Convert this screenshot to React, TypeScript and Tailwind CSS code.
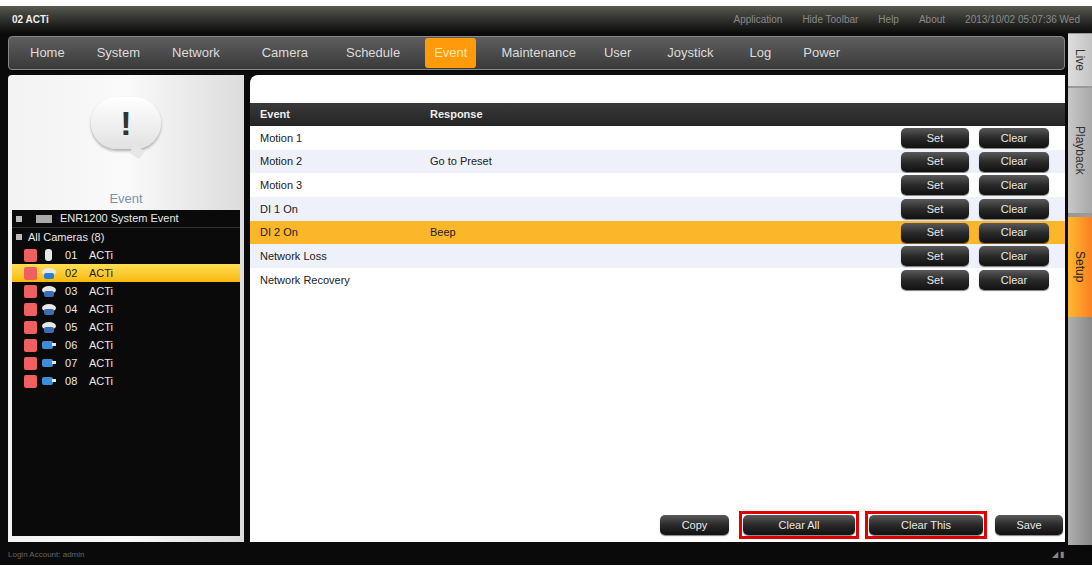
import React from "react";

const F = { fontFamily: '"Liberation Sans", Arial, sans-serif' };

function Btn({ label, w, red }: { label: string; w: string; red?: boolean }) {
  const b = (
    <div className={`${red ? "" : w} h-[20px] rounded-[5px] bg-gradient-to-b from-[#5a5a5a] via-[#2a2a2a] to-[#111] text-[#e8e8e8] text-[11px] flex items-center justify-center shadow-[0_1px_1px_rgba(0,0,0,0.5)]`}>
      {label}
    </div>
  );
  if (red) return <div className={`${w} border-[3px] border-[#e00000] p-[1px]`}>{b}</div>;
  return b;
}

const rows = [
  ["Motion 1", ""],
  ["Motion 2", "Go to Preset"],
  ["Motion 3", ""],
  ["DI 1 On", ""],
  ["DI 2 On", "Beep"],
  ["Network Loss", ""],
  ["Network Recovery", ""],
];

function CamIcon({ i }: { i: number }) {
  const c = i === 0 ? "#ddd" : i < 5 ? "#cfd8e0" : "#3a8fd8";
  return (
    <svg width="16" height="13" viewBox="0 0 16 13">
      {i === 0 ? (
        <rect x="4" y="0" width="7" height="12" rx="3" fill="#e8e8e8" />
      ) : i < 5 ? (
        <>
          <ellipse cx="8" cy="5" rx="7" ry="4" fill="#e8e8e8" />
          <rect x="3" y="6" width="10" height="6" rx="2" fill={i === 1 ? "#2a7fd0" : "#3a6fb8"} />
        </>
      ) : (
        <>
          <rect x="1" y="2" width="11" height="8" rx="2" fill={c} />
          <rect x="11" y="4" width="4" height="3" fill="#e8e8e8" />
        </>
      )}
    </svg>
  );
}

const nav: [string, string][] = [
  ["Home", "mr-[14px]"],
  ["System", "mr-[14px]"],
  ["Network", "mr-[24px]"],
  ["Camera", "mr-[20px]"],
  ["Schedule", "mr-[16px]"],
  ["Event", "mr-[16px]"],
  ["Maintenance", "mr-[10px]"],
  ["User", "mr-[18px]"],
  ["Joystick", "mr-[18px]"],
  ["Log", "mr-[14px]"],
  ["Power", ""],
];

export default function App() {
  return (
    <div className="w-[1092px] h-[565px] bg-white overflow-hidden pt-[6px]" style={F}>
      <div className="h-[559px] bg-[#0a0a0a] flex flex-col">
        <div className="h-[27px] bg-gradient-to-b from-[#5a5a52] to-[#0c0c0c] flex items-center px-[12px] text-[10px] text-[#d8d8d8]">
          <span className="font-bold text-[#eee]">02 ACTi</span>
          <div className="ml-auto flex gap-[20px] text-[#8a8a8a] text-[10px]">
            <span>Application</span><span>Hide Toolbar</span><span>Help</span><span>About</span>
            <span>2013/10/02 05:07:36 Wed</span>
          </div>
        </div>
        <div className="flex flex-1 min-h-0">
          <div className="flex-1 flex flex-col pl-[8px] pt-[3px]">
            <div className="h-[34px] mr-[3px] rounded-[4px] border border-[#888] bg-gradient-to-b from-[#5e5e5e] to-[#3a3a3a] flex items-center px-[12px] text-[13px] text-[#dcdcdc]">
              {nav.map(([n, m], i) => (
                <div key={n} className={`h-[30px] flex items-center px-[9px] ${m} ${i === 5 ? "bg-[#ff9a0a] rounded-[3px] text-[#ffe8b0]" : ""}`}>{n}</div>
              ))}
            </div>
            <div className="flex flex-1 gap-[6px] pt-[5px] pb-[3px]">
              <div className="w-[236px] flex flex-col bg-gradient-to-r from-[#f2f2f2] via-[#fafafa] to-[#dcdcdc] rounded-tl-[4px] px-[4px] pb-[6px]">
                <div className="h-[135px] flex flex-col items-center pt-[22px]">
                  <div className="relative w-[70px] h-[52px] rounded-[35px] bg-gradient-to-b from-white to-[#e2e2e2] shadow-[0_2px_3px_rgba(0,0,0,0.3)] flex items-center justify-center">
                    <span className="text-[#333] text-[34px] font-bold leading-none">!</span>
                    <div className="absolute bottom-[-8px] left-[40px] w-[12px] h-[10px] bg-[#e6e6e6] rotate-[35deg] rounded-[2px]" />
                  </div>
                  <div className="mt-auto text-[13px] text-[#7c92ac] mb-[2px]">Event</div>
                </div>
                <div className="flex-1 bg-[#0a0a0a] text-[11px] text-[#e8e8e8]">
                  <div className="h-[18px] flex items-center gap-[8px] px-[4px] border-b border-[#333]">
                    <span className="w-[6px] h-[6px] bg-[#bbb]" />
                    <span className="w-[16px] h-[8px] bg-[#aaa] ml-[6px]" />
                    <span>ENR1200 System Event</span>
                  </div>
                  <div className="h-[18px] flex items-center gap-[6px] px-[4px]">
                    <span className="w-[6px] h-[6px] bg-[#bbb]" />
                    <span>All Cameras (8)</span>
                  </div>
                  {[1, 2, 3, 4, 5, 6, 7, 8].map((n, i) => (
                    <div key={n} className={`h-[18px] flex items-center gap-[4px] pl-[12px] ${i === 1 ? "bg-gradient-to-b from-[#ffe050] to-[#f8b800] text-[#222]" : ""}`}>
                      <span className="w-[13px] h-[13px] bg-[#f06060] rounded-[2px]" />
                      <CamIcon i={i} />
                      <span className="ml-[4px] w-[20px]">0{n}</span>
                      <span>ACTi</span>
                    </div>
                  ))}
                </div>
              </div>
              <div className="flex-1 bg-white rounded-tl-[8px] flex flex-col text-[11px] text-[#222] mr-[3px]">
                <div className="h-[28px]" />
                <div className="h-[23px] bg-gradient-to-b from-[#3a3a3a] to-[#242424] flex items-center text-[#eee] font-bold px-[10px]">
                  <span className="w-[170px]">Event</span><span>Response</span>
                </div>
                {rows.map(([e, r], i) => (
                  <div key={e} className={`h-[23.7px] flex items-center pl-[10px] pr-[16px] ${i === 4 ? "bg-[#fbb62a]" : i % 2 ? "bg-[#eef0fa]" : "bg-white"}`}>
                    <span className="w-[170px]">{e}</span>
                    <span>{r}</span>
                    <div className="ml-auto flex gap-[10px]">
                      <Btn label="Set" w="w-[68px]" />
                      <Btn label="Clear" w="w-[70px]" />
                    </div>
                  </div>
                ))}
                <div className="mt-auto flex items-center justify-end gap-[6px] pr-[2px] pb-[3px]">
                  <div className="mr-[4px]"><Btn label="Copy" w="w-[69px]" /></div>
                  <Btn label="Clear All" w="w-[120px]" red />
                  <Btn label="Clear This" w="w-[122px]" red />
                  <div className="ml-[2px]"><Btn label="Save" w="w-[68px]" /></div>
                </div>
              </div>
            </div>
          </div>
          <div className="w-[24px] flex flex-col pt-[1px] bg-[#9a9a9a] text-[12px] text-[#333]">
            <div className="h-[52px] bg-gradient-to-r from-[#ddd] to-[#c4c4c4] flex items-center justify-center [writing-mode:vertical-rl]">Live</div>
            <div className="h-[125px] bg-gradient-to-r from-[#c8c8c8] to-[#a8a8a8] flex items-center justify-center [writing-mode:vertical-rl] mt-[2px]">Playback</div>
            <div className="h-[100px] bg-gradient-to-r from-[#ffb830] to-[#f88020] flex items-center justify-center [writing-mode:vertical-rl] mt-[4px] text-[#222]">Setup</div>
            <div className="flex-1 bg-gradient-to-r from-[#b0b0b0] to-[#888]" />
          </div>
        </div>
        <div className="h-[20px] flex items-center px-[8px] text-[8px] text-[#666]">
          <span>Login Account: admin</span>
          <span className="ml-auto mr-[20px] text-[#888]">◢ ▮</span>
        </div>
      </div>
    </div>
  );
}
